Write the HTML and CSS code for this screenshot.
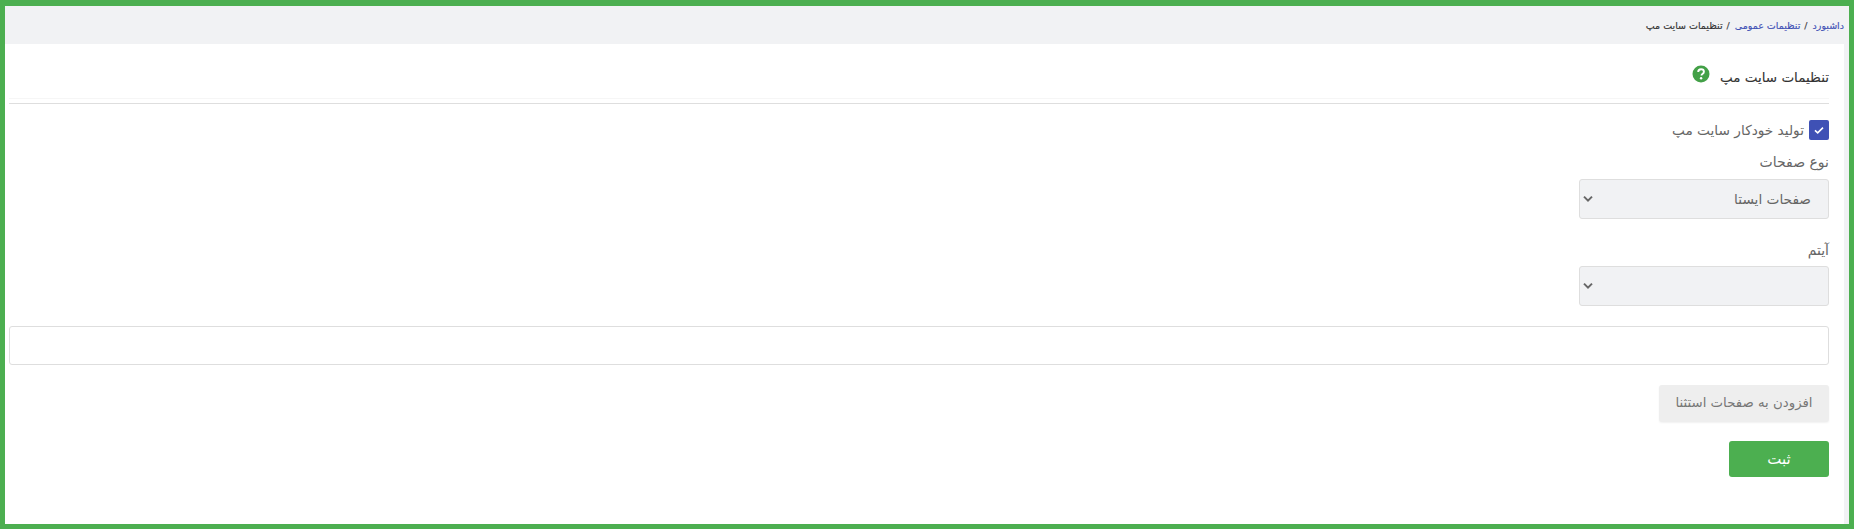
FILE: index.html
```html
<!DOCTYPE html>
<html lang="fa" dir="rtl">
<head>
<meta charset="utf-8">
<title>تنظیمات سایت مپ</title>
<link rel="stylesheet" href="styles.css">
</head>
<body>
<div class="frame">
  <nav class="crumbs">
    <a href="#">داشبورد</a><span class="sep">/</span>
    <a href="#">تنظیمات عمومی</a><span class="sep">/</span>
    <span class="current">تنظیمات سایت مپ</span>
  </nav>
  <main class="card">
    <header class="head">
      <h1 class="title">تنظیمات سایت مپ</h1>
      <svg class="help" viewBox="0 0 18 18" width="18" height="18" aria-hidden="true">
        <circle cx="9" cy="9" r="8.5" fill="#43a047"/>
        <path d="M6.2 7c0-1.7 1.2-2.7 2.9-2.7 1.6 0 2.8 1 2.8 2.4 0 1.1-.6 1.7-1.5 2.3-.6.4-.9.7-.9 1.5" fill="none" stroke="#fff" stroke-width="1.9"/>
        <circle cx="9.1" cy="13.2" r="1.2" fill="#fff"/>
      </svg>
    </header>
    <div class="rule"></div>
    <label class="check">
      <span class="box">
        <svg viewBox="0 0 20 20" width="20" height="20" aria-hidden="true"><path d="M6 10.3l2.7 2.6L14 7.6" fill="none" stroke="#fff" stroke-width="1.6"/></svg>
      </span>
      <span>تولید خودکار سایت مپ</span>
    </label>
    <label class="field-label first">نوع صفحات</label>
    <div class="select">
      <span class="value">صفحات ایستا</span>
      <svg class="chev" viewBox="0 0 10 8" width="10" height="8" aria-hidden="true"><path d="M1 1.6l4 4 4-4" fill="none" stroke="#666" stroke-width="2"/></svg>
    </div>
    <label class="field-label second">آیتم</label>
    <div class="select">
      <span class="value"></span>
      <svg class="chev" viewBox="0 0 10 8" width="10" height="8" aria-hidden="true"><path d="M1 1.6l4 4 4-4" fill="none" stroke="#666" stroke-width="2"/></svg>
    </div>
    <input class="text-input" type="text">
    <button class="btn btn-muted" type="button">افزودن به صفحات استثنا</button>
    <button class="btn btn-save" type="button">ثبت</button>
  </main>
</div>
</body>
</html>
```
FILE: styles.css
```css
* { box-sizing: border-box; }
html, body { margin: 0; height: 100%; }
body {
  font-family: "DejaVu Sans", "Noto Sans", sans-serif;
  color: #555;
  background: #f1f2f4;
}
.frame {
  height: 529px;
  border: 5px solid #4caf50;
  border-top-width: 6px;
  display: flex;
  flex-direction: column;
  background: #f1f2f4;
}
.crumbs {
  height: 38px;
  flex: none;
  display: flex;
  align-items: center;
  padding: 0 5px 0 0;
  font-size: 9.5px;
  color: #333;
  -webkit-text-stroke: .15px currentColor;
}
.crumbs a { color: #3f51b5; text-decoration: none; }
.crumbs .sep { margin: 0 5px 0 4px; color: #444; }
.crumbs .current { color: #333; }
.card {
  flex: 1;
  margin-right: 5px;
  background: #fff;
  padding: 0 15px 0 4px;
  display: flex;
  flex-direction: column;
  align-items: flex-start;
}
.head {
  align-self: stretch;
  height: 55px;
  flex: none;
  display: flex;
  align-items: center;
  gap: 10px;
  border-bottom: 1px solid #f6f6f6;
  padding-top: 5px;
}
.title {
  margin: 0;
  font-size: 13.5px;
  font-weight: 400;
  color: #333;
  -webkit-text-stroke: .1px #333;
  position: relative;
  top: 3px;
}
.rule {
  align-self: stretch;
  height: 1px;
  flex: none;
  margin-top: 4px;
  background: #dedede;
}
.check {
  margin-top: 16px;
  display: flex;
  align-items: center;
  gap: 5px;
  font-size: 13.7px;
  color: #666;
  height: 20px;
}
.box {
  width: 20px;
  height: 20px;
  border-radius: 2px;
  background: #3f51b5;
  display: block;
}
.box svg { display: block; }
.field-label { display: block; font-size: 14px; color: #666; line-height: 20px; }
.field-label.first { margin-top: 12px; }
.field-label.second { margin-top: 21px; }
.select {
  width: 250px;
  height: 40px;
  margin-top: 7px;
  flex: none;
  display: flex;
  align-items: center;
  justify-content: space-between;
  padding: 0 17px 0 3px;
  border: 1px solid #dedede;
  border-radius: 3px;
  background: #f1f2f4;
  font-size: 13.7px;
  color: #666;
}
.field-label.second + .select { margin-top: 6px; }
.text-input {
  align-self: stretch;
  height: 39px;
  flex: none;
  margin-top: 20px;
  border: 1px solid #dedede;
  border-radius: 3px;
  background: #fff;
  outline: none;
}
.btn {
  display: block;
  flex: none;
  border: 0;
  border-radius: 3px;
  font-family: inherit;
}
.btn-muted {
  width: 170px;
  height: 37px;
  margin-top: 20px;
  padding: 0 0 2px;
  font-size: 13.3px;
  background: #eeeeee;
  color: #777;
  box-shadow: 0 1px 2px rgba(0,0,0,.06);
}
.btn-save {
  width: 100px;
  height: 36px;
  margin-top: 19px;
  font-size: 15px;
  background: #4caf50;
  color: #fff;
}
```
